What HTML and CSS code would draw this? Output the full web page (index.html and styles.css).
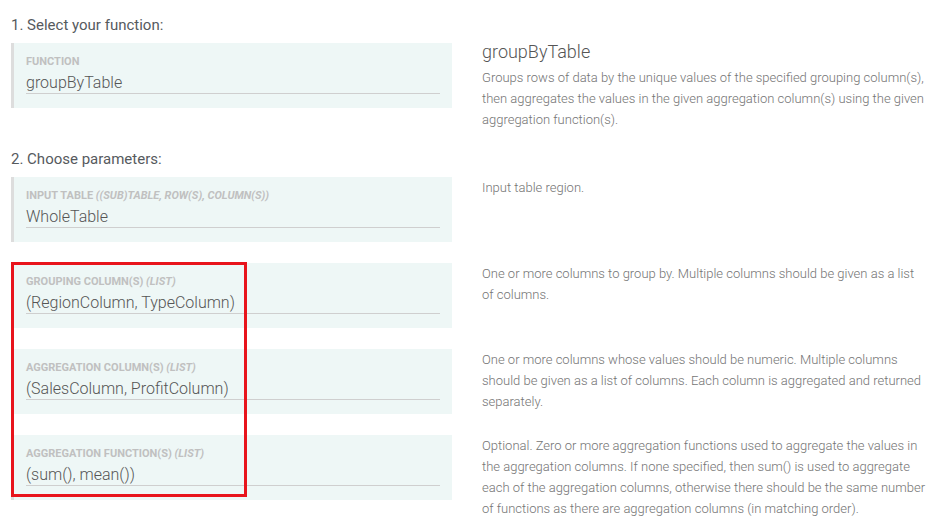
FILE: index.html
```html
<!DOCTYPE html>
<html>
<head>
<meta charset="utf-8">
<link rel="stylesheet" href="styles.css">
</head>
<body>
<div class="page">
  <h2 class="step">1. Select your function:</h2>
  <div class="row row-first">
    <div class="field">
      <div class="label">FUNCTION</div>
      <div class="value">groupByTable</div>
    </div>
    <div class="desc">
      <div class="desc-title">groupByTable</div>
      <p>Groups rows of data by the unique values of the specified grouping column(s), then aggregates the values in the given aggregation column(s) using the given aggregation function(s).</p>
    </div>
  </div>

  <h2 class="step">2. Choose parameters:</h2>
  <div class="row">
    <div class="field">
      <div class="label">INPUT TABLE <em>((SUB)TABLE, ROW(S), COLUMN(S))</em></div>
      <div class="value">WholeTable</div>
    </div>
    <div class="desc"><p>Input table region.</p></div>
  </div>

  <div class="highlight-group">
    <div class="row">
      <div class="field">
        <div class="label">GROUPING COLUMN(S) <em>(LIST)</em></div>
        <div class="value">(RegionColumn, TypeColumn)</div>
      </div>
      <div class="desc"><p>One or more columns to group by. Multiple columns should be given as a list of columns.</p></div>
    </div>
    <div class="row">
      <div class="field">
        <div class="label">AGGREGATION COLUMN(S) <em>(LIST)</em></div>
        <div class="value">(SalesColumn, ProfitColumn)</div>
      </div>
      <div class="desc"><p>One or more columns whose values should be numeric. Multiple columns should be given as a list of columns. Each column is aggregated and returned separately.</p></div>
    </div>
    <div class="row">
      <div class="field">
        <div class="label">AGGREGATION FUNCTION(S) <em>(LIST)</em></div>
        <div class="value">(sum(), mean())</div>
      </div>
      <div class="desc"><p>Optional. Zero or more aggregation functions used to aggregate the values in the aggregation columns. If none specified, then sum() is used to aggregate each of the aggregation columns, otherwise there should be the same number of functions as there are aggregation columns (in matching order).</p></div>
    </div>
    <div class="red-frame"></div>
  </div>
</div>
</body>
</html>
```

FILE: styles.css
```css
* { box-sizing: border-box; }
html, body { margin: 0; padding: 0; background: #ffffff; }
body {
  font-family: Roboto, "Noto Sans", "Liberation Sans", sans-serif;
  color: #555555;
  overflow: hidden;
}
.page {
  padding: 15px 0 0 11px;
}
.step {
  margin: 0 0 8px 0;
  font-size: 15px;
  line-height: 20px;
  font-weight: 400;
  color: #565a5e;
}
.row {
  display: grid;
  grid-template-columns: 441px 445px;
  column-gap: 30px;
  align-items: start;
  margin-bottom: 21px;
}
.row-first {
  margin-bottom: 19px;
}
.field {
  height: 65px;
  background: #eef7f6;
  border-left: 3px solid #dddddd;
  padding: 12px 12px 0 12px;
}
.label {
  font-size: 11px;
  line-height: 13px;
  font-weight: 700;
  color: #c0c0c0;
  white-space: nowrap;
}
.label em { font-style: italic; }
.value {
  margin-top: 5px;
  font-size: 16px;
  line-height: 20px;
  font-weight: 300;
  color: #555555;
  padding-bottom: 0;
  border-bottom: 1px solid #cfcfcf;
}
.desc {
  font-size: 13px;
  line-height: 21px;
  color: #747474;
  font-weight: 300;
}
.desc p { margin: 0; }
.desc-title {
  font-size: 18px;
  line-height: 21px;
  font-weight: 300;
  color: #555555;
  margin-top: -2px;
  margin-bottom: 5px;
}
.highlight-group {
  position: relative;
}
.red-frame {
  position: absolute;
  left: 0;
  top: -1px;
  width: 236px;
  height: 235px;
  border: 3px solid #e8141c;
}
```
